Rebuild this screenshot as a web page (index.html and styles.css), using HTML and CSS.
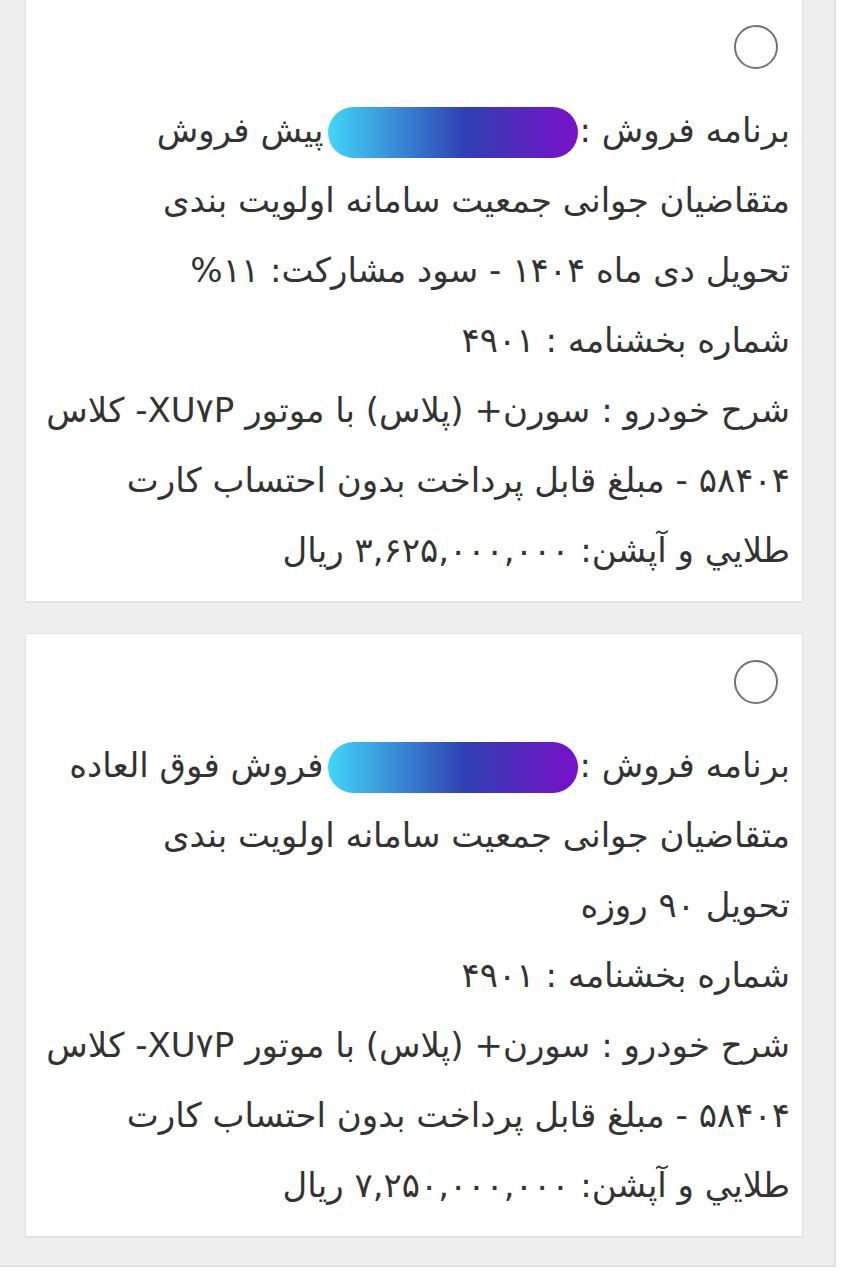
FILE: index.html
```html
<!DOCTYPE html>
<html lang="fa" dir="rtl">
<head>
<meta charset="utf-8">
<title>برنامه فروش</title>
<link rel="stylesheet" href="styles.css">
</head>
<body>
<div class="panel">
  <div class="list">
    <div class="card">
      <span class="radio"></span>
      <div class="lines">
        <div class="line">برنامه فروش :<span class="pill"></span>پیش فروش</div>
        <div class="line">متقاضیان جوانی جمعیت سامانه اولویت بندی</div>
        <div class="line">تحویل دی ماه ۱۴۰۴ - سود مشارکت: ۱۱%</div>
        <div class="line">شماره بخشنامه : ۴۹۰۱</div>
        <div class="line">شرح خودرو : سورن+ (پلاس) با موتور XU۷P- کلاس</div>
        <div class="line">۵۸۴۰۴ - مبلغ قابل پرداخت بدون احتساب کارت</div>
        <div class="line">طلايي و آپشن: ۳,۶۲۵,۰۰۰,۰۰۰ ریال</div>
      </div>
    </div>
    <div class="card">
      <span class="radio"></span>
      <div class="lines">
        <div class="line">برنامه فروش :<span class="pill"></span>فروش فوق العاده</div>
        <div class="line">متقاضیان جوانی جمعیت سامانه اولویت بندی</div>
        <div class="line">تحویل ۹۰ روزه</div>
        <div class="line">شماره بخشنامه : ۴۹۰۱</div>
        <div class="line">شرح خودرو : سورن+ (پلاس) با موتور XU۷P- کلاس</div>
        <div class="line">۵۸۴۰۴ - مبلغ قابل پرداخت بدون احتساب کارت</div>
        <div class="line">طلايي و آپشن: ۷,۲۵۰,۰۰۰,۰۰۰ ریال</div>
      </div>
    </div>
  </div>
</div>
</body>
</html>
```
FILE: styles.css
```css
html, body {
  margin: 0;
  padding: 0;
  background: #ffffff;
}
body {
  font-family: "DejaVu Sans", "Noto Sans", sans-serif;
  color: #333333;
}
.panel {
  width: 836px;
  height: 1267px;
  margin-left: 0;
  margin-right: auto;
  box-sizing: border-box;
  background: #eeeeee;
  border-right: 2px solid #e0e0e0;
  border-bottom: 2px solid #e0e0e0;
  padding: 0 31px 0 25px;
  overflow: hidden;
}
.list {
  display: flex;
  flex-direction: column;
  gap: 31px;
  margin-top: -2px;
}
.card {
  background: #ffffff;
  border: 1px solid #e2e2e2;
  box-shadow: 0 1px 1px rgba(0,0,0,0.04);
  padding: 26px 12px 16px 12px;
  display: flex;
  flex-direction: column;
  align-items: flex-start;
}
.radio {
  display: block;
  width: 40px;
  height: 40px;
  border: 2.5px solid #737373;
  border-radius: 50%;
  margin-right: 12px;
  margin-bottom: 26px;
}
.lines {
  width: 100%;
}
.line {
  height: 70px;
  line-height: 70px;
  font-size: 34px;
  white-space: nowrap;
  text-align: right;
}
.pill {
  display: inline-block;
  width: 250px;
  height: 51px;
  border-radius: 26px;
  vertical-align: middle;
  background: linear-gradient(to right, #42d6f9 0%, #2f3fb3 55%, #7a10c9 100%);
  margin: 0 2px 0 4px;
}
```
